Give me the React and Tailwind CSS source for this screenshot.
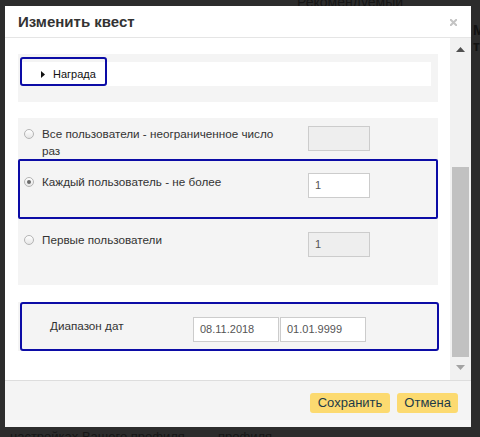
import React from "react";

function Radio({ checked }) {
  return (
    <span className="w-[10px] h-[10px] rounded-full border border-[#b4b4b4] bg-[linear-gradient(#ffffff,#e6e6e6)] flex items-center justify-center">
      {checked && <span className="w-[4px] h-[4px] rounded-full bg-[#6a6a6a]" />}
    </span>
  );
}

function Field({ value, disabled, w = "w-[62px]" }) {
  return (
    <div
      className={`${w} h-[25px] border border-[#cccccc] ${disabled ? "bg-[#eeeeee]" : "bg-white"} pl-[6px] flex items-center text-[11px] text-[#555555]`}
    >
      {value}
    </div>
  );
}

export default function App() {
  return (
    <div className="relative w-[480px] h-[437px] overflow-hidden bg-[#2c2c2c] pt-[6px] pl-[5px] font-['Liberation_Sans',Arial,sans-serif]">
      {/* page behind the overlay */}
      <div className="absolute left-[297px] top-[-8px] text-[14px] text-[#161616]">Рекомендуемый</div>
      <div className="absolute left-[473px] top-[22px] text-[14px] font-bold leading-[16px] text-[#111111]">Ме<br />тк</div>
      <div className="absolute left-[10px] top-[427px] text-[13px] text-[#161616]">настройках Вашего профиля</div>
      <div className="absolute left-[218px] top-[427px] text-[13px] text-[#161616]">профиля</div>

      {/* modal */}
      <div className="relative w-[466px] h-[421px] bg-white flex flex-col">
        {/* header */}
        <div className="h-[32px] shrink-0 border-b border-[#e5e5e5] flex items-center justify-between pl-[13px] pr-[14px]">
          <span className="text-[15px] font-bold text-[#333333] leading-none">Изменить квест</span>
          <svg width="7" height="7" viewBox="0 0 7 7" className="mt-[1px]">
            <path d="M0.5 0.5 L6.5 6.5 M6.5 0.5 L0.5 6.5" stroke="#c4c4c4" strokeWidth="2" strokeLinecap="square" />
          </svg>
        </div>

        {/* body */}
        <div className="h-[342px] shrink-0 flex">
          <div className="w-[445px] pl-[13px] pt-[16px]">
            {/* reward panel */}
            <div className="relative w-[420px] h-[48px] bg-[#f4f4f4] pt-[8px] pl-[3px] pr-[7px]">
              <div className="h-[24px] bg-white flex items-center pl-[20px]">
                <svg width="4" height="7" viewBox="0 0 4 7">
                  <path d="M0 0 L4 3.5 L0 7 Z" fill="#111111" />
                </svg>
                <span className="ml-[8px] text-[11px] text-[#111111]">Награда</span>
              </div>
              <div className="absolute left-[2px] top-[3px] w-[87px] h-[29px] border-2 border-[#0c0ca6] rounded-[3px]" />
            </div>

            {/* limits panel */}
            <div className="mt-[16px] w-[420px] h-[167px] bg-[#f4f4f4] text-[11.7px] leading-[17px] text-[#333333]">
              <div className="h-[41px] flex items-start pl-[6px]">
                <div className="mt-[7px] h-[17px] flex items-center pt-[1px]"><Radio /></div>
                <div className="mt-[7px] ml-[8px] w-[240px]">Все пользователи - неограниченное число раз</div>
                <div className="mt-[8px] ml-[26px]"><Field disabled value="" /></div>
              </div>
              <div className="relative h-[60px] flex items-start pl-[6px]">
                <div className="mt-[14px] h-[17px] flex items-center pt-[1px]"><Radio checked /></div>
                <div className="mt-[14px] ml-[8px] w-[240px]">Каждый пользователь - не более</div>
                <div className="mt-[14px] ml-[26px]"><Field value="1" /></div>
                <div className="absolute inset-0 border-2 border-[#0c0ca6] rounded-[2px]" />
              </div>
              <div className="h-[66px] flex items-start pl-[6px]">
                <div className="mt-[12px] h-[17px] flex items-center pt-[1px]"><Radio /></div>
                <div className="mt-[12px] ml-[8px] w-[240px]">Первые пользователи</div>
                <div className="mt-[13px] ml-[26px]"><Field disabled value="1" /></div>
              </div>
            </div>

            {/* date range panel */}
            <div className="relative mt-[17px] w-[420px] h-[49px] bg-[#f4f4f4] flex items-start text-[11.7px] leading-[17px] text-[#333333]">
              <div className="ml-[32px] mt-[15px] w-[143px]">Диапазон дат</div>
              <div className="mt-[15px] flex gap-[1px]">
                <Field w="w-[86px]" value="08.11.2018" />
                <Field w="w-[86px]" value="01.01.9999" />
              </div>
              <div className="absolute top-0 bottom-0 left-[2px] -right-[1px] border-2 border-[#0c0ca6] rounded-[3px]" />
            </div>
          </div>

          {/* scrollbar */}
          <div className="w-[21px] bg-[#f1f1f1] flex flex-col">
            <div className="h-[22px] flex items-center justify-center">
              <svg width="9" height="5" viewBox="0 0 9 5">
                <path d="M0 5 L4.5 0 L9 5 Z" fill="#505050" />
              </svg>
            </div>
            <div className="h-[107px]" />
            <div className="h-[190px] mx-[2px] bg-[#c1c1c1]" />
            <div className="flex-1 flex justify-center pt-[8px]">
              <svg width="9" height="5" viewBox="0 0 9 5">
                <path d="M0 0 L9 0 L4.5 5 Z" fill="#a3a3a3" />
              </svg>
            </div>
          </div>
        </div>

        {/* footer */}
        <div className="flex-1 border-t border-[#dddddd] bg-[#f4f4f4] flex justify-end items-start pt-[12px] pr-[13px] gap-[7px]">
          <button className="h-[20px] px-[8px] rounded-[3px] bg-[#fcda70] text-[13px] leading-[20px] text-[#1d3a48]">Сохранить</button>
          <button className="h-[20px] px-[7px] rounded-[3px] bg-[#fcda70] text-[13px] leading-[20px] text-[#1d3a48]">Отмена</button>
        </div>
      </div>
    </div>
  );
}
